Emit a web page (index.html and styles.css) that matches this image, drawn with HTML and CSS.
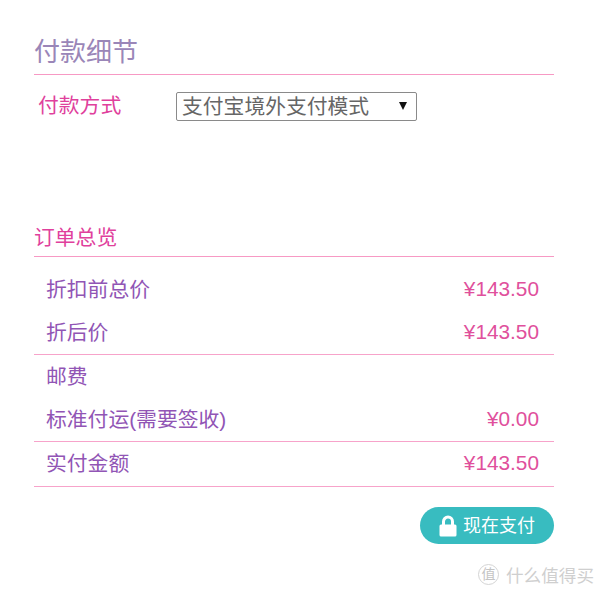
FILE: index.html
```html
<!DOCTYPE html>
<html lang="zh">
<head>
<meta charset="utf-8">
<title>付款细节</title>
<link rel="stylesheet" href="styles.css">
</head>
<body>
<main class="page">
  <h1 class="title">付款细节</h1>
  <div class="method">
    <label class="method-label" for="pay">付款方式</label>
    <div class="select-wrap">
      <select id="pay" class="select"><option>支付宝境外支付模式</option></select>
      <span class="select-arrow"></span>
    </div>
  </div>
  <h2 class="subtitle">订单总览</h2>
  <section class="group first">
    <div class="row"><span class="label">折扣前总价</span><span class="price">¥143.50</span></div>
    <div class="row"><span class="label">折后价</span><span class="price">¥143.50</span></div>
  </section>
  <section class="group">
    <div class="row"><span class="label">邮费</span></div>
    <div class="row"><span class="label">标准付运(需要签收)</span><span class="price">¥0.00</span></div>
  </section>
  <section class="group">
    <div class="row last"><span class="label">实付金额</span><span class="price">¥143.50</span></div>
  </section>
  <div class="actions">
    <button class="pay" type="button">
      <svg class="lock" width="18" height="22" viewBox="0 0 18 22"><path d="M4.500 10V6.500a4.500 4.500 0 0 1 9 0V10" fill="none" stroke="#fff" stroke-width="3"/><rect x="0.500" y="9.500" width="17" height="12" rx="1.500" fill="#fff"/></svg>
      <span class="pay-text">现在支付</span>
    </button>
  </div>
</main>
<div class="watermark">
  <span class="wm-badge">值</span>
  <span>什么值得买</span>
</div>
</body>
</html>
```
FILE: styles.css
```css
* { box-sizing: border-box; }
html, body { margin: 0; padding: 0; background: #fff; }
body {
  height: 591px;
  overflow: hidden;
  position: relative;
  font-family: "Liberation Sans", "Noto Sans CJK SC", sans-serif;
}
.page { width: 520px; margin-left: 34px; padding-top: 35px; }
.title {
  margin: 0;
  height: 40px;
  padding-top: 1px;
  border-bottom: 1px solid #f799c4;
  font-size: 26px;
  line-height: 33px;
  font-weight: 400;
  color: #9a86b8;
}
.method { display: flex; align-items: flex-start; padding: 17px 0 0 4px; height: 138px; }
.method-label { width: 138px; font-size: 20.800px; line-height: 27px; color: #e0409c; }
.select-wrap { position: relative; width: 241px; height: 29px; }
.select {
  appearance: none;
  display: block;
  width: 100%;
  height: 100%;
  padding: 0 0 4px 5px;
  border: 1px solid #8a8a8a;
  border-radius: 2px;
  background: #fff;
  font-family: "Noto Sans CJK SC", sans-serif;
  font-size: 20.800px;
  line-height: 24px;
  color: #666;
}
.select-arrow {
  position: absolute;
  right: 10px;
  top: 10px;
  border-left: 4px solid transparent;
  border-right: 4px solid transparent;
  border-top: 8px solid #111;
}
.subtitle {
  margin: 0;
  height: 44px;
  padding-top: 11px;
  border-bottom: 1px solid #f799c4;
  font-size: 20.800px;
  line-height: 27px;
  font-weight: 400;
  color: #e0409c;
}
.group { border-bottom: 1px solid #f7a3ca; padding: 0 15px 0 12px; color: #9155b5; }
.group.first { padding-top: 11px; }
.row {
  display: flex;
  justify-content: space-between;
  align-items: center;
  height: 43px;
  padding-bottom: 1px;
  font-size: 20.800px;
}
.row.last { height: 44px; padding-bottom: 2px; }
.label { padding-bottom: 3px; }
.price { color: #e0509c; }
.actions { display: flex; justify-content: flex-end; padding-top: 20px; }
.pay {
  display: flex;
  align-items: center;
  gap: 6px;
  width: 134px;
  height: 37px;
  padding: 0 0 0 19px;
  border: 0;
  border-radius: 19px;
  background: #38bcc0;
  color: #fff;
  font-family: "Noto Sans CJK SC", sans-serif;
  font-size: 18px;
}
.pay-text { padding-bottom: 3px; }
.lock { flex: none; }
.watermark {
  position: absolute;
  left: 478px;
  top: 562px;
  display: flex;
  align-items: center;
  gap: 7px;
  font-size: 17.600px;
  color: #cfcfcf;
}
.wm-badge {
  width: 21px;
  height: 21px;
  border: 1px solid #d4d4d4;
  border-radius: 50%;
  font-size: 14px;
  line-height: 19px;
  text-align: center;
  color: #c4c4c4;
}
```
